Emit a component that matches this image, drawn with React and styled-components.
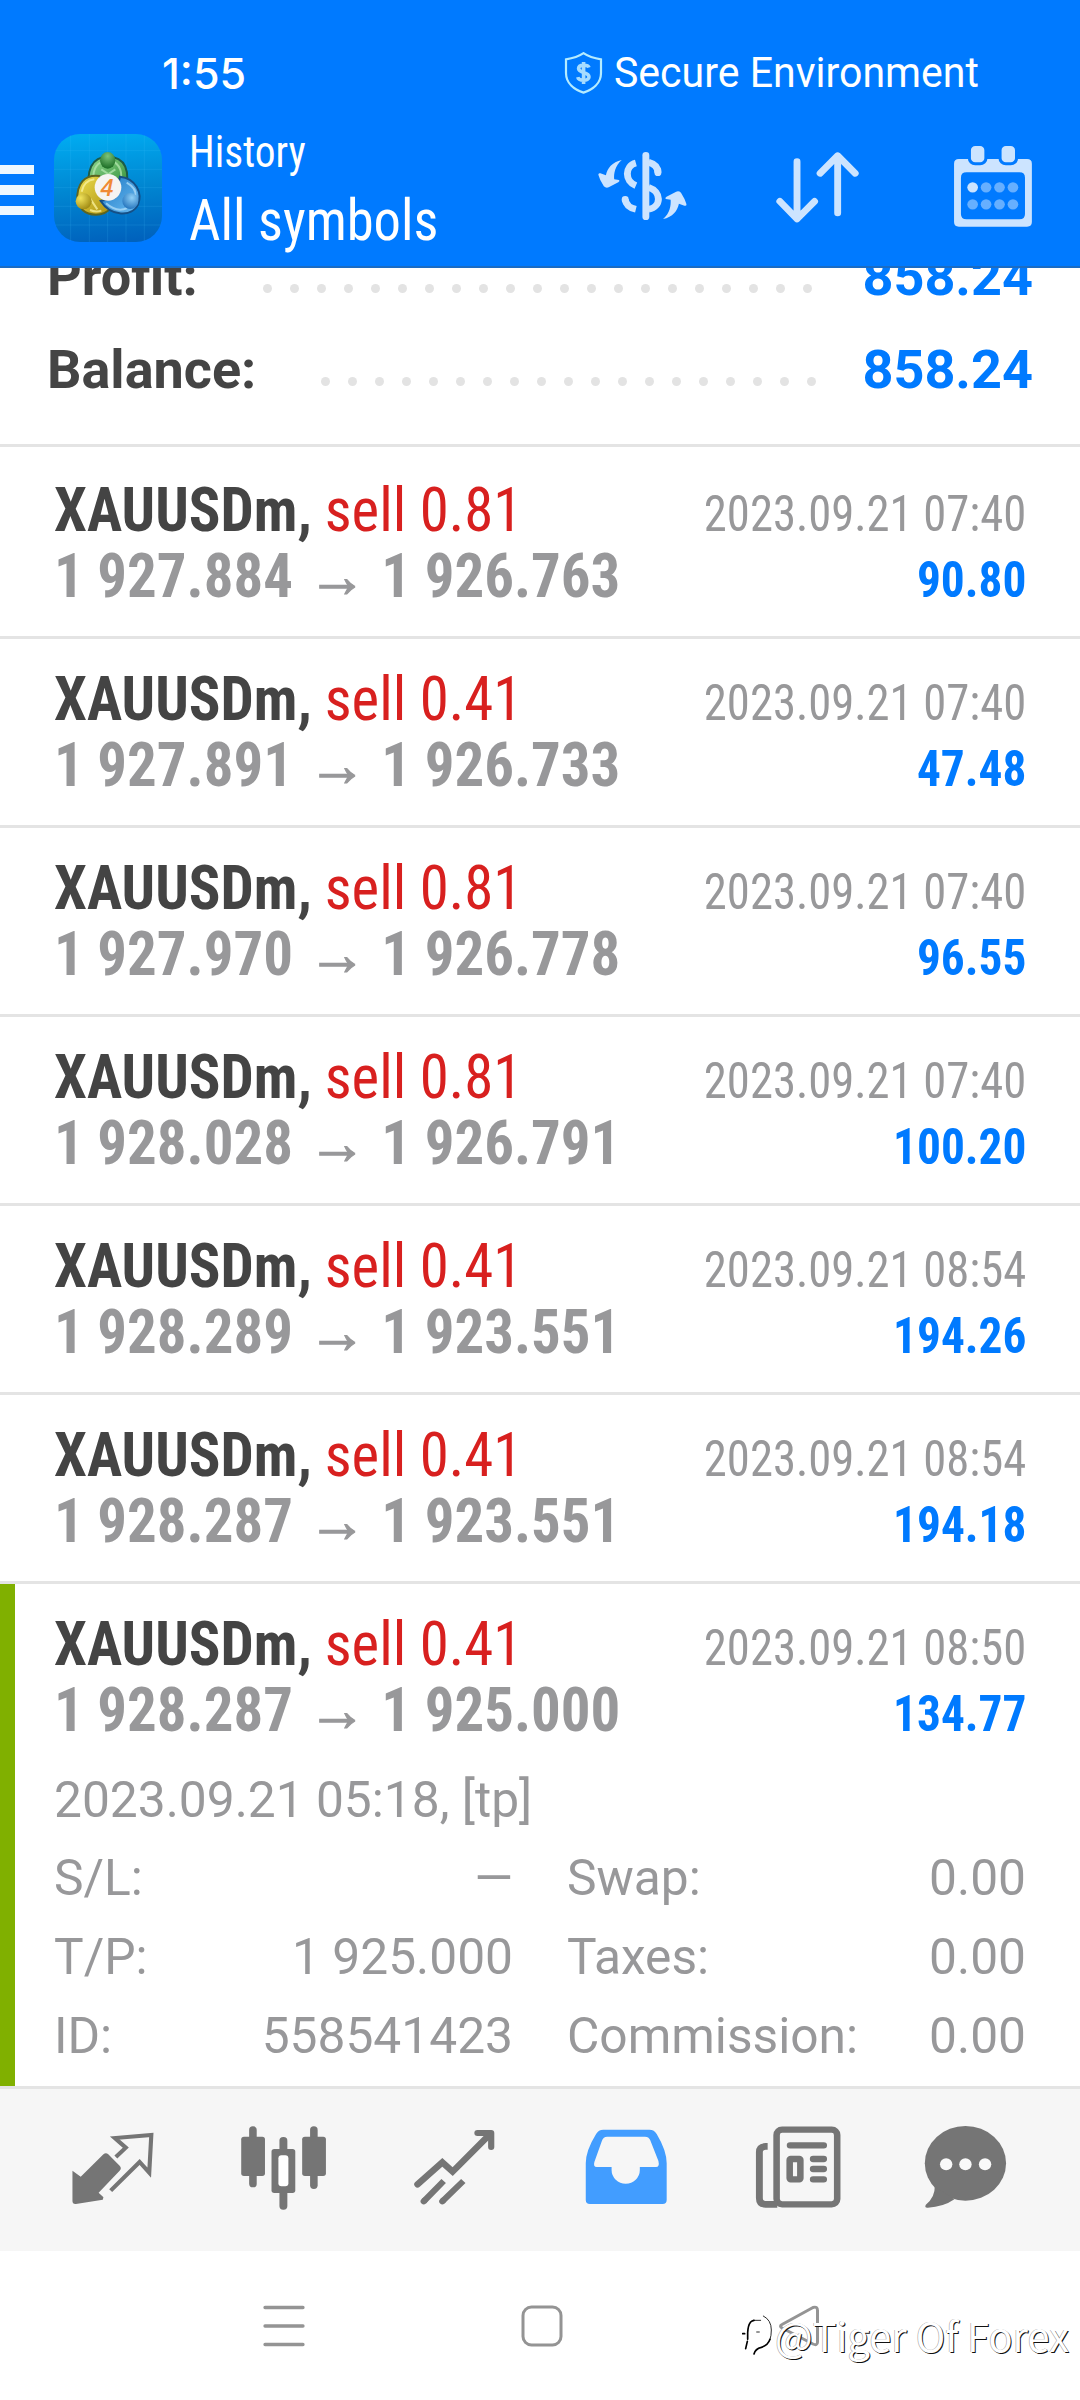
import React from "react";
import styled, { createGlobalStyle } from "styled-components";

const ACCENT = "#007aff";
const GREY = "#98989a";
const TAB_GREY = "#757575";
const ICON_LIGHT = "#cce4ff";
const LINE = "#e4e4e4";

const GlobalStyle = createGlobalStyle`
  * { box-sizing: border-box; }
  body { margin: 0; background: #fff; font-family: Roboto, "Liberation Sans", sans-serif; }
  svg { display: block; flex: none; }
`;

const Screen = styled.div`
  position: relative;
  display: flex;
  flex-direction: column;
  width: 1080px;
  height: 2400px;
  overflow: hidden;
  background: #fff;
`;

/* Text set in the condensed face, tightened by a horizontal factor. */
const Condensed = styled.span`
  display: block;
  flex: none;
  white-space: pre;
  font-family: "Roboto Condensed", Roboto, sans-serif;
  font-size: ${(p) => p.$size}px;
  font-weight: ${(p) => (p.$bold ? 700 : 400)};
  line-height: ${(p) => p.$line || p.$size}px;
  color: ${(p) => p.$color};
  transform: scaleX(${(p) => p.$squeeze || 0.957});
  transform-origin: ${(p) => (p.$end ? "right" : "left")} center;
`;

const Header = styled.header`
  flex: none;
  height: 268px;
  background: ${ACCENT};
  border-bottom: 2px solid #1a6cc4;
  color: #fff;
`;

const StatusBar = styled.div`
  display: flex;
  align-items: center;
  height: 110px;
  padding: 35px 92px 0 162px;
`;

const Clock = styled.span`
  font: 500 43px/48px Inter, Roboto, sans-serif;
`;

const Secure = styled.div`
  display: flex;
  align-items: center;
  gap: 11px;
  margin-left: auto;
`;

const SecureText = styled.span`
  font-size: 42px;
  line-height: 48px;
  white-space: nowrap;
  transform: scaleX(0.977);
  transform-origin: left center;
`;

const Toolbar = styled.div`
  display: flex;
  align-items: center;
  height: 156px;
`;

const MenuButton = styled.div`
  display: flex;
  flex-direction: column;
  gap: 11px;
  width: 34px;
  margin-right: 20px;
  padding-top: 4px;
`;

const MenuBar = styled.span`
  height: 9.6px;
  background: #eef7ff;
`;

const Titles = styled.div`
  align-self: flex-start;
  padding: 12px 0 0 26.5px;
`;

const Actions = styled.div`
  display: flex;
  margin-left: auto;
`;

const Action = styled.div`
  display: flex;
  justify-content: center;
  width: 175px;
`;

const History = styled.main`
  flex: none;
  height: 1818px;
  overflow: hidden;
`;

const Summary = styled.section`
  margin-top: -38px;
  padding-bottom: 28px;
  border-bottom: 3px solid ${LINE};
`;

const SummaryRow = styled.div`
  display: flex;
  align-items: center;
  height: 93px;
  padding: 0 47px;
  font-size: 54px;
  font-weight: 700;
  line-height: 93px;
`;

const SummaryLabel = styled.span`
  color: #444;
`;

const SummaryValue = styled.span`
  color: ${ACCENT};
`;

const Leader = styled.span`
  display: flex;
  gap: 18px;
  margin-left: auto;
  margin-right: ${(p) => p.$gap}px;
  padding-top: 24px;
`;

const Dot = styled.i`
  width: 9px;
  height: 9px;
  border-radius: 50%;
  background: #e3e3e3;
`;

const Deals = styled.section`
  padding-top: 3px;
`;

const Deal = styled.article`
  height: ${(p) => (p.$open ? 502 : 189)}px;
  padding: 27px 54px 0 ${(p) => (p.$open ? 39 : 54)}px;
  border-left: ${(p) => (p.$open ? "15px solid #80b000" : "0")};
  border-bottom: ${(p) => (p.$open ? "0" : `3px solid ${LINE}`)};
`;

const DealLine = styled.div`
  display: flex;
  align-items: baseline;
  justify-content: space-between;
  height: 66px;
`;

const DealTitle = styled.span`
  display: flex;
  gap: 13.5px;
  flex: none;
  font: 400 61.5px/66px "Roboto Condensed", Roboto, sans-serif;
  white-space: nowrap;
  color: #d8201f;
  transform: scaleX(0.957);
  transform-origin: left center;
`;

const Symbol = styled.b`
  color: #444;
`;

const Arrow = styled.span`
  margin: 0 1.3px;
  -webkit-text-stroke: 1.2px currentColor;
`;

const Comment = styled.div`
  margin-top: 17.6px;
  font-size: 49.7px;
  line-height: 78.8px;
  color: ${GREY};
`;

const Details = styled.div`
  display: grid;
  grid-template-columns: 1fr 1fr;
  column-gap: 54px;
  font-size: 49.7px;
  line-height: 78.8px;
  color: ${GREY};
`;

const Detail = styled.div`
  display: flex;
  justify-content: space-between;
`;

const TabBar = styled.nav`
  display: flex;
  flex: none;
  align-items: center;
  height: 165px;
  padding: 0 27px;
  border-top: 3px solid ${LINE};
  background: #f6f6f6;
`;

const Tab = styled.div`
  display: flex;
  justify-content: center;
  width: 171px;
`;

const SystemNav = styled.div`
  display: flex;
  flex: 1;
  align-items: center;
  justify-content: center;
  padding-left: 3px;
`;

const NavKey = styled.div`
  display: flex;
  justify-content: center;
  width: 257.5px;
`;

const Watermark = styled.div`
  position: absolute;
  left: 742px;
  top: 2305px;
  display: flex;
  align-items: center;
  gap: 2px;
  height: 60px;
`;

const WatermarkText = styled.span`
  font: 400 39.8px/60px "Noto Sans CJK SC", "Noto Sans", sans-serif;
  color: #fff;
  white-space: nowrap;
  text-shadow: 1px 1px 0 #111, -0.5px 0 0 #999;
`;

const ShieldIcon = () => (
  <svg width="39" height="42" viewBox="0 0 39 42" fill="none">
    <path d="M19.5 1.2 C25 5 31 6.5 37 7.4 V21 C37 31 29 37.5 19.5 40.6 C10 37.5 2 31 2 21 V7.4 C8 6.5 14 5 19.5 1.2Z" stroke="#b5ecff" strokeWidth="2.200" />
    <path d="M25 15.5 C24 12.7 14.6 12 14.6 16.6 C14.6 21.4 25 19.4 25 25 C25 29.6 14.6 29 13.8 25.2 M19.6 10 V32" stroke="#a6dcff" strokeWidth="3.600" />
  </svg>
);

const AppIcon = () => (
  <svg width="108" height="108" viewBox="42 12 324 324">
    <defs>
      <linearGradient id="tile" x1="0.45" y1="0" x2="0.55" y2="1">
        <stop offset="0" stopColor="#00aaf0" />
        <stop offset="0.5" stopColor="#0087d2" />
        <stop offset="1" stopColor="#0062bd" />
      </linearGradient>
      <linearGradient id="green" x1="0" y1="0" x2="1" y2="1">
        <stop offset="0" stopColor="#8fd68e" />
        <stop offset="1" stopColor="#2b8a32" />
      </linearGradient>
      <linearGradient id="gold" x1="0" y1="0" x2="1" y2="1">
        <stop offset="0" stopColor="#eedf4e" />
        <stop offset="1" stopColor="#ab8f10" />
      </linearGradient>
      <linearGradient id="sky" x1="0" y1="0" x2="1" y2="1">
        <stop offset="0" stopColor="#1d78c4" />
        <stop offset="1" stopColor="#6bbcf2" />
      </linearGradient>
      <radialGradient id="headGreen" cx="0.5" cy="0.25" r="0.8">
        <stop offset="0" stopColor="#7cc47a" />
        <stop offset="1" stopColor="#14661e" />
      </radialGradient>
      <radialGradient id="headGold" cx="0.3" cy="0.3" r="0.8">
        <stop offset="0" stopColor="#f2e45c" />
        <stop offset="1" stopColor="#9c8610" />
      </radialGradient>
      <radialGradient id="headSky" cx="0.6" cy="0.3" r="0.8">
        <stop offset="0" stopColor="#8fd0f7" />
        <stop offset="1" stopColor="#1b6cb8" />
      </radialGradient>
    </defs>
    <rect x="42" y="12" width="324" height="324" rx="78" fill="url(#tile)" />
    <g stroke="#4cc8ff" strokeOpacity="0.15" strokeWidth="3">
      <path d="M92 16V332M148 12V336M203 12V336M258 12V336M313 16V332M46 62H362M42 118H366M42 173H366M42 229H366M46 285H362" />
    </g>
    <path d="M160 188 C134 155 144 92 188 82 H220 C266 92 276 155 240 192Z" fill="url(#green)" stroke="#1c5c46" strokeWidth="6" />
    <path d="M168 168 C152 140 162 108 182 97 M236 165 C250 140 244 110 224 97 M184 118L205 132L226 118" fill="none" stroke="#b9eab4" strokeWidth="6" strokeOpacity="0.7" />
    <path d="M112 215 C108 158 136 133 178 138 L215 232 C188 264 145 256 128 240Z" fill="url(#gold)" stroke="#5c6420" strokeWidth="6" />
    <path d="M150 205 L172 238 M125 185 C130 162 145 150 163 148 M150 240 Q168 248 184 242" fill="none" stroke="#fbf3a0" strokeWidth="6" strokeOpacity="0.75" />
    <path d="M240 140 C288 145 308 190 294 224 C276 262 212 260 182 213 L225 203Z" fill="url(#sky)" stroke="#154f86" strokeWidth="6" />
    <path d="M198 220 C223 242 245 242 262 234 M260 158 C282 170 289 185 286 200" fill="none" stroke="#b8e2fb" strokeWidth="6" strokeOpacity="0.7" />
    <ellipse cx="203" cy="91" rx="23" ry="25" fill="url(#headGreen)" />
    <circle cx="131" cy="214" r="24" fill="url(#headGold)" />
    <circle cx="271" cy="213" r="24" fill="url(#headSky)" />
    <circle cx="204" cy="172" r="40" fill="#f6f4f2" />
    <text x="201" y="197" textAnchor="middle" fontFamily="Open Sans, sans-serif" fontStyle="italic" fontWeight="600" fontSize="70" fill="#f08a35">4</text>
  </svg>
);

const ActionSvg = ({ x, children }) => (
  <svg width="100" height="100" viewBox={`${x} 414 290.4 300`} preserveAspectRatio="none" fill="none" stroke={ICON_LIGHT} strokeLinecap="round" strokeLinejoin="round">
    {children}
  </svg>
);

const curvedArrow = "M236 480 C216 498 213 520 214 538 L228 540 Q232 543 226 547 L198 562 Q190 565 184 559 Q172 540 168 524 Q168 518 174 520 L190 526 C194 505 208 486 236 480Z";

const CurrencyIcon = () => (
  <ActionSvg x={152.5}>
    <path d={curvedArrow} fill={ICON_LIGHT} stroke="none" />
    <path d={curvedArrow} fill={ICON_LIGHT} stroke="none" transform="rotate(180 296 568.5)" />
    <g strokeWidth="20">
      <path d="M306 466V650" />
      <path d="M277 489C244 498 244 543 277 557M314 487C332 492 341 503 341 518M314 562C352 575 352 620 314 628" strokeLinecap="butt" />
      <path d="M341 512V518M246 598V600" />
      <path d="M246 598C248 615 260 624 277 628" strokeLinecap="butt" />
    </g>
  </ActionSvg>
);

const SortIcon = () => (
  <ActionSvg x={660.7}>
    <path strokeWidth="20" d="M745 485V656M695 604L745 657L796 604M863 639V468M812 520L863 467L914 520" />
  </ActionSvg>
);

const CalendarIcon = () => (
  <ActionSvg x={1168.9}>
    <path fill={ICON_LIGHT} stroke="none" fillRule="evenodd" d="M1215 477H1413Q1427 477 1427 491V666Q1427 680 1413 680H1215Q1201 680 1201 666V491Q1201 477 1215 477ZM1237 517Q1221 517 1221 533V642Q1221 658 1237 658H1391Q1407 658 1407 642V533Q1407 517 1391 517Z" />
    <g fill={ICON_LIGHT} stroke={ACCENT} strokeWidth="9">
      <rect x="1245.500" y="433.500" width="48" height="58" rx="17" />
      <rect x="1334.500" y="433.500" width="48" height="58" rx="17" />
    </g>
    <g stroke="none">
      {[562, 613].map((cy) =>
        [1255, 1294, 1333, 1372].map((cx) => (
          <circle key={`${cx}-${cy}`} cx={cx} cy={cy} r="15.500" fill={cx === 1255 && cy === 562 ? ICON_LIGHT : "#66afff"} />
        ))
      )}
    </g>
  </ActionSvg>
);

const TabSvg = ({ x, children }) => (
  <svg width="120" height="100" viewBox={`${x} 120 348.5 300`} preserveAspectRatio="none" fill="none" stroke={TAB_GREY} strokeLinejoin="round">
    {children}
  </svg>
);

const QuotesIcon = () => (
  <TabSvg x={152.5}>
    <path fill={TAB_GREY} stroke="none" d="M209 272L233 290L299 223Q306 216 313 223L346 257Q353 265 346 272L285 338L299 352L297 359L219 372Q209 373 209 363Z" />
    <path strokeWidth="12" strokeLinejoin="miter" d="M335 231L364 203L332 174L438 165L432 278L404 246L320 332" />
  </TabSvg>
);

const ChartIcon = () => (
  <TabSvg x={649}>
    <g fill={TAB_GREY} stroke="none">
      <rect x="722" y="139" width="22" height="183" rx="11" />
      <rect x="699" y="170" width="69" height="118" rx="8" />
      <rect x="899" y="139" width="22" height="188" rx="11" />
      <rect x="876" y="170" width="69" height="118" rx="8" />
      <rect x="810" y="171" width="23" height="218" rx="11" />
      <rect x="787" y="207" width="69" height="132" rx="8" />
      <rect x="807" y="226" width="29" height="93" rx="9" fill="#fff" />
    </g>
  </TabSvg>
);

const TradeIcon = () => (
  <TabSvg x={1145.6}>
    <path strokeWidth="19" strokeLinecap="round" strokeLinejoin="miter" d="M1211 313L1283 247L1313 275L1422 162" />
    <path strokeWidth="18" strokeLinecap="round" d="M1385 159H1425V201" />
    <path strokeWidth="18" d="M1229 364L1287 303M1283 364L1344 303" />
    <path strokeWidth="18" strokeLinecap="round" d="M1229 364l2-2M1283 364l2-2" />
  </TabSvg>
);

const HistoryIcon = () => (
  <TabSvg x={75.6}>
    <path fill="#429dff" stroke="none" fillRule="evenodd" d="M184 149H318Q332 149 339 162Q368 212 368 250V360Q368 372 356 372H145Q133 372 133 360V250Q133 212 163 162Q170 149 184 149ZM195 170Q184 170 180 182L158 246Q154 261 165 261H208V270A41 41 0 0 0 290 270V261H337Q348 261 344 243L320 180Q316 170 305 170Z" />
  </TabSvg>
);

const NewsIcon = () => (
  <TabSvg x={573}>
    <rect x="688" y="149" width="176" height="224" rx="16" strokeWidth="19" />
    <path strokeWidth="20" d="M662 199H656Q638 200 638 216V355Q638 373 656 373H690" />
    <rect x="726" y="237" width="31" height="61" rx="3" strokeWidth="19" />
    <path strokeWidth="19" strokeLinecap="round" d="M727 196H825M794 237H825M794 267H825M794 298H825" />
  </TabSvg>
);

const MessagesIcon = () => (
  <TabSvg x={1067.2}>
    <g fill={TAB_GREY} stroke="none">
      <ellipse cx="1234" cy="250" rx="118" ry="112" />
      <path d="M1145 318Q1146 352 1119 374Q1114 384 1125 383Q1170 381 1202 358Z" />
    </g>
    <g fill="#f9f9f9" stroke="none">
      <circle cx="1178" cy="253" r="18" />
      <circle cx="1234" cy="253" r="18" />
      <circle cx="1291" cy="253" r="18" />
    </g>
  </TabSvg>
);

const RecentKey = () => (
  <svg width="44" height="44" viewBox="0 0 44 44" stroke="#949494" strokeWidth="3.300" strokeLinecap="round">
    <path d="M3 3.500H41M3 22H41M3 40.500H41" />
  </svg>
);

const HomeKey = () => (
  <svg width="44" height="44" viewBox="0 0 44 44" fill="none" stroke="#949494" strokeWidth="3">
    <rect x="3" y="3" width="38" height="38" rx="8.500" />
  </svg>
);

const BackKey = () => (
  <svg width="44" height="44" viewBox="0 0 44 44" fill="none" stroke="#949494" strokeWidth="3" strokeLinejoin="round">
    <path d="M5 20.500L36 3.500Q40.500 2 40.500 6.500V38Q40.500 42 36 40L5 24Q2 22 5 20.500Z" />
  </svg>
);

const WatermarkLogo = () => (
  <svg width="31" height="42" viewBox="36 64 93 126" fill="none" stroke="#000" strokeLinecap="round">
    <path strokeWidth="5" d="M38 123H44M47 168L52 146M53 140V120Q54 98 62 88Q66 84 72 83M72 184Q76 168 94 164Q114 158 120 140" />
    <path strokeWidth="2.500" d="M70 83H92M100 70Q124 82 124 112Q124 130 120 140M80 118H88" />
  </svg>
);

const summary = [
  { label: "Profit:", value: "858.24", dots: 21, gap: 50 },
  { label: "Balance:", value: "858.24", dots: 19, gap: 46 },
];

const deals = [
  { volume: "0.81", open: "1 927.884", close: "1 926.763", time: "2023.09.21 07:40", profit: "90.80" },
  { volume: "0.41", open: "1 927.891", close: "1 926.733", time: "2023.09.21 07:40", profit: "47.48" },
  { volume: "0.81", open: "1 927.970", close: "1 926.778", time: "2023.09.21 07:40", profit: "96.55" },
  { volume: "0.81", open: "1 928.028", close: "1 926.791", time: "2023.09.21 07:40", profit: "100.20" },
  { volume: "0.41", open: "1 928.289", close: "1 923.551", time: "2023.09.21 08:54", profit: "194.26" },
  { volume: "0.41", open: "1 928.287", close: "1 923.551", time: "2023.09.21 08:54", profit: "194.18" },
  {
    volume: "0.41", open: "1 928.287", close: "1 925.000", time: "2023.09.21 08:50", profit: "134.77",
    comment: "2023.09.21 05:18, [tp]",
    details: [
      ["S/L:", "—"], ["Swap:", "0.00"],
      ["T/P:", "1 925.000"], ["Taxes:", "0.00"],
      ["ID:", "558541423"], ["Commission:", "0.00"],
    ],
  },
];

const DealRow = ({ deal }) => (
  <Deal $open={Boolean(deal.details)}>
    <DealLine>
      <DealTitle>
        <Symbol>XAUUSDm,</Symbol>
        <span>sell {deal.volume}</span>
      </DealTitle>
      <Condensed $size={49.5} $squeeze={0.942} $color={GREY} $end>{deal.time}</Condensed>
    </DealLine>
    <DealLine>
      <Condensed $size={61.5} $line={66} $color={GREY} $bold>
        {deal.open} <Arrow>→</Arrow> {deal.close}
      </Condensed>
      <Condensed $size={49.5} $color={ACCENT} $bold $end>{deal.profit}</Condensed>
    </DealLine>
    {deal.details && (
      <>
        <Comment>{deal.comment}</Comment>
        <Details>
          {deal.details.map(([label, value]) => (
            <Detail key={label}>
              <span>{label}</span>
              <span>{value}</span>
            </Detail>
          ))}
        </Details>
      </>
    )}
  </Deal>
);

export default function App() {
  return (
    <Screen>
      <GlobalStyle />
      <Header>
        <StatusBar>
          <Clock>1:55</Clock>
          <Secure>
            <ShieldIcon />
            <SecureText>Secure Environment</SecureText>
          </Secure>
        </StatusBar>
        <Toolbar>
          <MenuButton>
            <MenuBar />
            <MenuBar />
            <MenuBar />
          </MenuButton>
          <AppIcon />
          <Titles>
            <Condensed $size={44} $line={60} $squeeze={0.94} $color="#fff">History</Condensed>
            <Condensed $size={57.2} $line={77} $squeeze={0.954} $color="#fff">All symbols</Condensed>
          </Titles>
          <Actions>
            <Action><CurrencyIcon /></Action>
            <Action><SortIcon /></Action>
            <Action><CalendarIcon /></Action>
          </Actions>
        </Toolbar>
      </Header>
      <History>
        <Summary>
          {summary.map((row) => (
            <SummaryRow key={row.label}>
              <SummaryLabel>{row.label}</SummaryLabel>
              <Leader $gap={row.gap}>
                {Array.from({ length: row.dots }, (_, i) => <Dot key={i} />)}
              </Leader>
              <SummaryValue>{row.value}</SummaryValue>
            </SummaryRow>
          ))}
        </Summary>
        <Deals>
          {deals.map((deal, i) => <DealRow key={i} deal={deal} />)}
        </Deals>
      </History>
      <TabBar>
        <Tab><QuotesIcon /></Tab>
        <Tab><ChartIcon /></Tab>
        <Tab><TradeIcon /></Tab>
        <Tab><HistoryIcon /></Tab>
        <Tab><NewsIcon /></Tab>
        <Tab><MessagesIcon /></Tab>
      </TabBar>
      <SystemNav>
        <NavKey><RecentKey /></NavKey>
        <NavKey><HomeKey /></NavKey>
        <NavKey><BackKey /></NavKey>
      </SystemNav>
      <Watermark>
        <WatermarkLogo />
        <WatermarkText>@Tiger Of Forex</WatermarkText>
      </Watermark>
    </Screen>
  );
}
